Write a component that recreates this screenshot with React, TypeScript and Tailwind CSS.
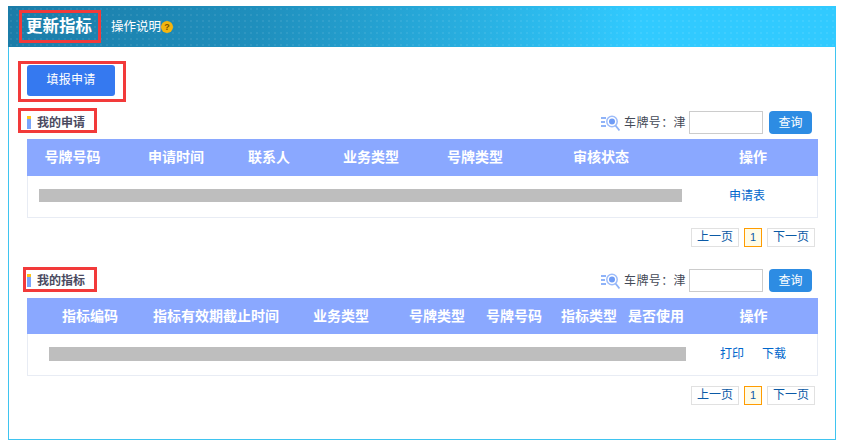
const font = { fontFamily: '"Liberation Sans","Noto Sans CJK SC",sans-serif' };

function SearchIcon() {
  return (
    <svg width="19" height="16" viewBox="0 0 19 16" fill="none" className="shrink-0">
      <path d="M0 3h5M0 7h4M0 11h5" stroke="#8fb3f8" strokeWidth="1.8" />
      <circle cx="11" cy="6.5" r="5.2" stroke="#9dbcfa" strokeWidth="1.5" />
      <circle cx="11" cy="6.5" r="3" fill="#6f9cf5" />
      <path d="M14.5 10.5l4 5" stroke="#8fb3f8" strokeWidth="1.8" />
    </svg>
  );
}

function Search({ className }: { className: string }) {
  return (
    <div className={`flex items-center ${className}`}>
      <SearchIcon />
      <span className="ml-[4px] text-[12px] leading-none text-[#444a57] w-[65px] tracking-[0.4px] whitespace-nowrap">车牌号：津</span>
      <input className="w-[74px] h-[23px] border border-[#cccccc] bg-white" />
      <button className="ml-[6px] w-[43px] h-[23px] rounded-[4px] bg-[#2d8ce3] text-white text-[12px]">查询</button>
    </div>
  );
}

function Pager() {
  const cls = "h-[19px] border border-[#e1e1e1] text-[12px] leading-[17px] text-[#0b5aa6] text-center";
  return (
    <div className="flex justify-end gap-[5px] pr-[20px]">
      <span className={`${cls} w-[48px]`}>上一页</span>
      <span className="h-[19px] w-[18px] border border-[#ff9c00] bg-[#fffbe5] text-[11px] leading-[17px] text-[#0b5aa6] text-center">1</span>
      <span className={`${cls} w-[48px]`}>下一页</span>
    </div>
  );
}

function Marker() {
  return (
    <span className="flex flex-col w-[4px] h-[13px] shrink-0">
      <span className="h-[3px] bg-[#ffc61a]" />
      <span className="flex-1 bg-[#7aa5fb]" />
    </span>
  );
}

function Head({ cols, labels, height }: { cols: string; labels: string[]; height: string }) {
  return (
    <div className={`grid ${cols} ${height} items-center bg-[#8aa8ff] text-white text-[14px] font-bold text-center`}>
      {labels.map((l) => (
        <span key={l} className="whitespace-nowrap">{l}</span>
      ))}
    </div>
  );
}

export default function App() {
  return (
    <div className="w-[844px] h-[446px] bg-white pt-[6px] pl-[8px]" style={font}>
      <div className="w-[828px] h-[434px] border-x border-b border-[#3fc4f0] flex flex-col">
        <div className="-mx-px h-[41px] flex items-center pl-[11px] bg-[radial-gradient(circle,rgba(255,255,255,0.07)_1px,transparent_1.5px),linear-gradient(90deg,#1b7ca8_0%,#1f8fbd_30%,#2ab4e6_60%,#31caff_76%,#31caff_100%)] bg-[length:6px_6px,100%_100%]">
          <div className="w-[82px] h-[33px] border-[3px] border-[#f23a3a] flex items-center pl-[4px] text-white text-[16.5px] font-bold whitespace-nowrap">更新指标</div>
          <span className="ml-[10px] pt-[2px] text-white text-[12.5px] whitespace-nowrap">操作说明</span>
          <span className="mt-[1px] w-[12px] h-[12px] rounded-full bg-[#f5b50f] text-[9px] leading-[12px] text-center text-[#7a5200] font-bold">?</span>
        </div>

        <div className="pl-[9px] pt-[14px]">
          <div className="w-[108px] h-[41px] border-[3px] border-[#f23a3a] pl-[6px] pt-px">
            <button className="w-[88px] h-[31px] rounded-[3px] bg-[#3579f0] text-white text-[12px] tracking-[0.3px] pb-px">填报申请</button>
          </div>
        </div>

        <div className="flex items-center justify-between pl-[9px] pr-[23px] mt-[6px] h-[25px]">
          <div className="w-[79px] h-[25px] border-[3px] border-[#f23a3a] flex items-center pl-[6px] pt-[4px] gap-[6px]">
            <Marker />
            <span className="text-[12px] font-bold text-[#4a4a60] whitespace-nowrap">我的申请</span>
          </div>
          <Search className="mt-[4px]" />
        </div>

        <div className="ml-[18px] mt-[6px] w-[791px] h-[79px] border-x border-b border-[#e8ecf4]">
          <div className="-mx-px">
            <Head height="h-[37px]" cols="grid-cols-[91px_116px_70px_134px_74px_178px_126px]" labels={["号牌号码", "申请时间", "联系人", "业务类型", "号牌类型", "审核状态", "操作"]} />
          </div>
          <div className="h-[41px] flex items-center pl-[11px] pb-[2px]">
            <div className="w-[643px] h-[13px] bg-[#bebebe]" />
            <a className="ml-[47px] text-[12px] text-[#0066cc] whitespace-nowrap">申请表</a>
          </div>
        </div>

        <div className="mt-[10px]"><Pager /></div>

        <div className="flex items-center justify-between pl-[14px] pr-[23px] mt-[20px] h-[25px]">
          <div className="w-[74px] h-[25px] border-[3px] border-[#f23a3a] flex items-center pl-[1px] pt-[2px] gap-[6px]">
            <Marker />
            <span className="text-[12px] font-bold text-[#4a4a60] whitespace-nowrap">我的指标</span>
          </div>
          <Search className="mt-[2px]" />
        </div>

        <div className="ml-[18px] mt-[6px] w-[791px] h-[78px] border-x border-b border-[#e8ecf4]">
          <div className="-mx-px">
            <Head height="h-[36px]" cols="grid-cols-[126px_124px_128px_64px_90px_60px_74px_121px]" labels={["指标编码", "指标有效期截止时间", "业务类型", "号牌类型", "号牌号码", "指标类型", "是否使用", "操作"]} />
          </div>
          <div className="h-[41px] flex items-center pl-[21px] pb-[1px]">
            <div className="w-[637px] h-[14px] bg-[#bebebe]" />
            <a className="ml-[34px] text-[12px] text-[#0066cc] whitespace-nowrap">打印</a>
            <a className="ml-[18px] text-[12px] text-[#0066cc] whitespace-nowrap">下载</a>
          </div>
        </div>

        <div className="mt-[10px]"><Pager /></div>
      </div>
    </div>
  );
}
